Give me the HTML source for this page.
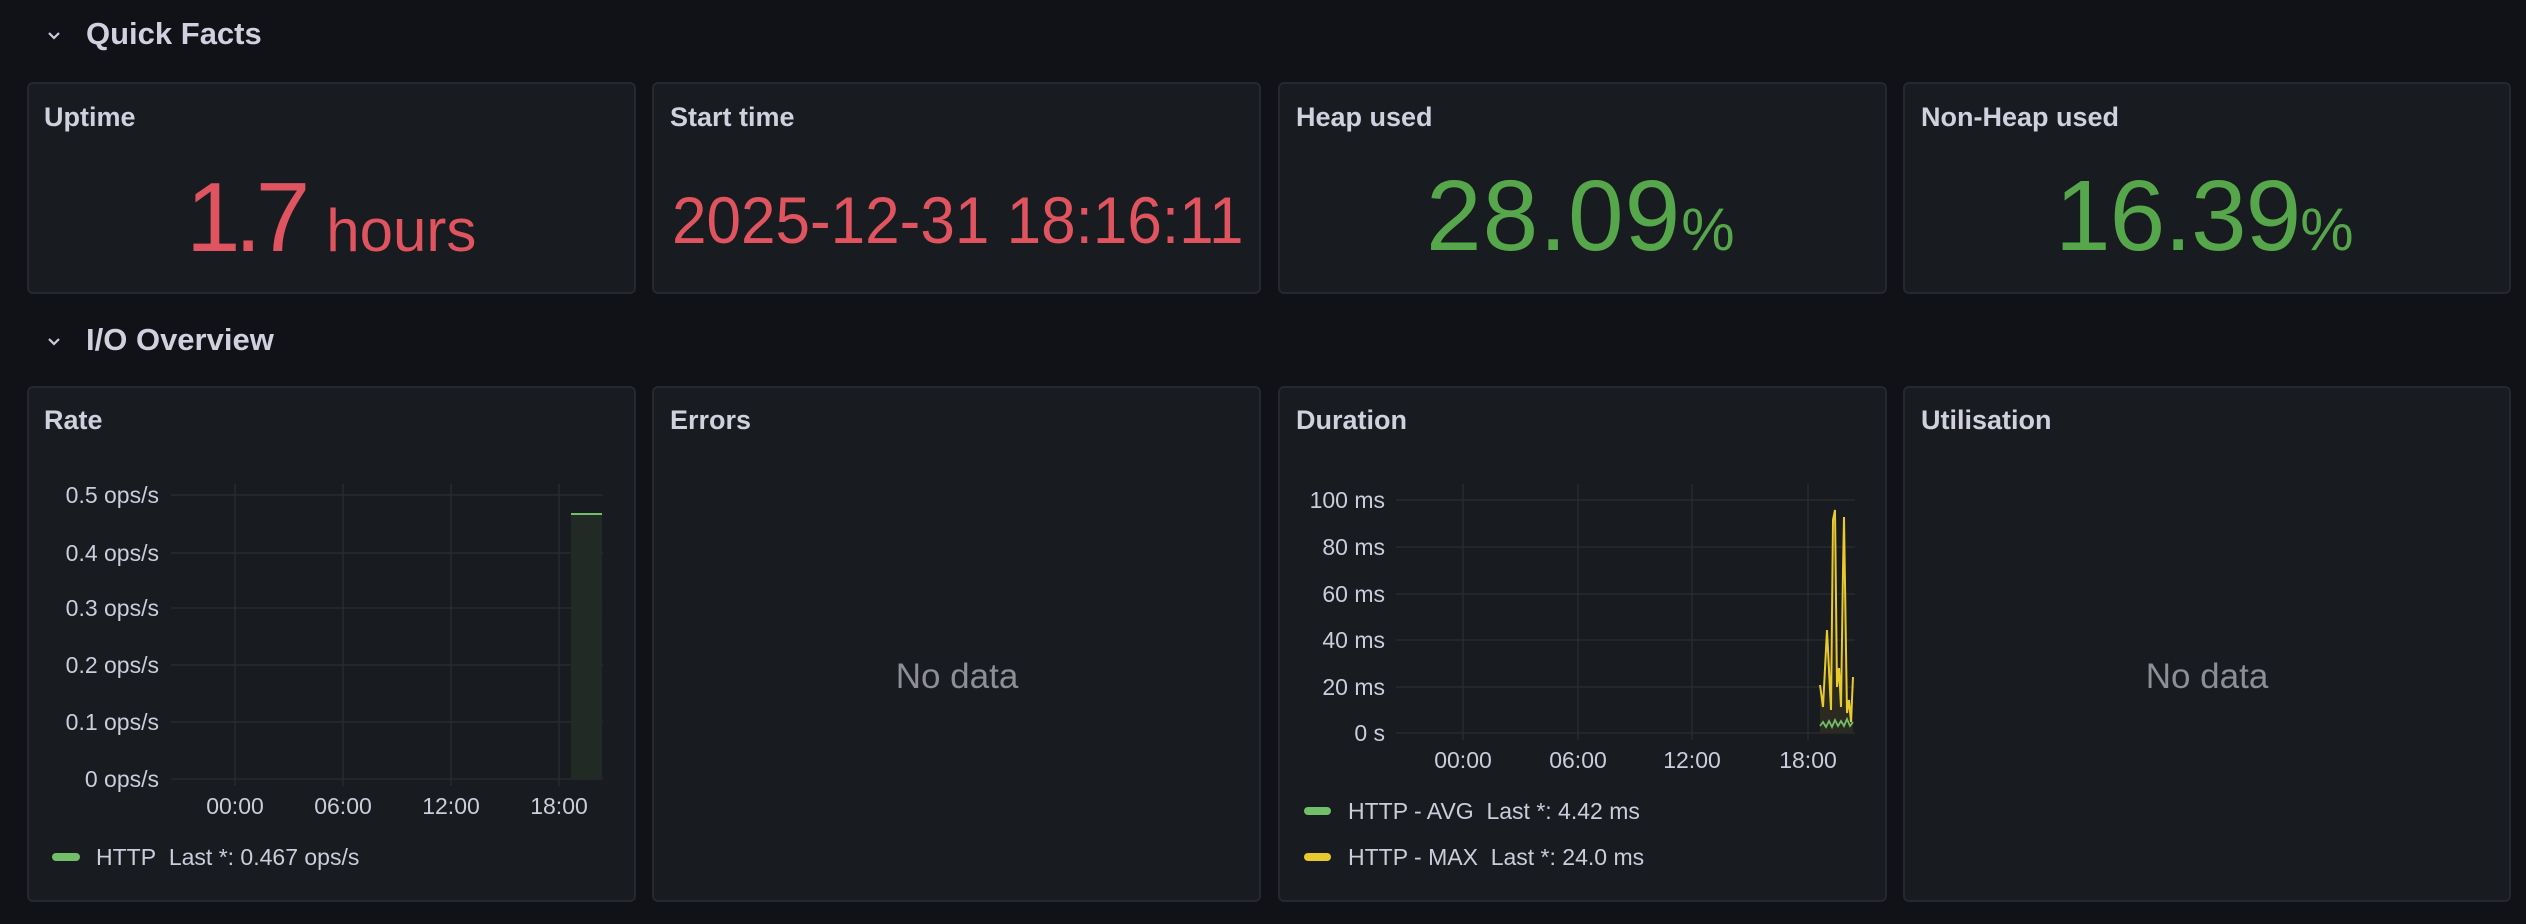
<!DOCTYPE html>
<html><head><meta charset="utf-8"><style>
*{margin:0;padding:0;box-sizing:border-box}
body{width:2526px;height:924px;background:#111217;position:relative;overflow:hidden;font-family:"Liberation Sans",sans-serif;color:#ccccdc}
.a{position:absolute;white-space:nowrap}
.p{position:absolute;background:#181b1f;border:2px solid #25282e;border-radius:6px}
.t{font-size:27px;font-weight:bold;color:#d0d0de}
.h{font-size:31px;font-weight:bold;color:#d0d0de}
.yl{font-size:23px;text-align:right;width:150px;line-height:28px;color:#ccccdc}
.xl{font-size:23px;line-height:28px;width:100px;text-align:center;color:#ccccdc}
.lg{font-size:23px;line-height:28px;color:#ccccdc}
.sw{position:absolute;height:8px;border-radius:4px}
.nd{font-size:35px;color:#8e8e96;line-height:40px;text-align:center}
</style></head><body>
<svg class="a" style="left:44px;top:26px" width="20" height="20" viewBox="0 0 20 20"><path d="M5 7 L10 12 L15 7" stroke="#ccccdc" stroke-width="2.2" fill="none"/></svg>
<div class="a h" style="left:86px;top:16px;line-height:36px">Quick Facts</div>
<svg class="a" style="left:44px;top:332px" width="20" height="20" viewBox="0 0 20 20"><path d="M5 7 L10 12 L15 7" stroke="#ccccdc" stroke-width="2.2" fill="none"/></svg>
<div class="a h" style="left:86px;top:322px;line-height:36px">I/O Overview</div>

<div class="p" style="left:27px;top:82px;width:609px;height:212px"></div>
<div class="p" style="left:652px;top:82px;width:609px;height:212px"></div>
<div class="p" style="left:1278px;top:82px;width:609px;height:212px"></div>
<div class="p" style="left:1903px;top:82px;width:608px;height:212px"></div>
<div class="a t" style="left:44px;top:101px;line-height:32px">Uptime</div>
<div class="a t" style="left:670px;top:101px;line-height:32px">Start time</div>
<div class="a t" style="left:1296px;top:101px;line-height:32px">Heap used</div>
<div class="a t" style="left:1921px;top:101px;line-height:32px">Non-Heap used</div>

<div class="a" style="left:186px;top:167px;line-height:100px;color:#e0545f"><span style="font-size:98px;letter-spacing:-6px">1.7</span><span style="font-size:60px;margin-left:22px">hours</span></div>
<div class="a" style="left:672px;top:180px;line-height:80px;color:#e0545f;font-size:66px;transform-origin:0 0;transform:scaleX(0.94)">2025-12-31 18:16:11</div>
<div class="a" style="left:1426px;top:166px;line-height:100px;color:#56a64b"><span style="font-size:100px;letter-spacing:1px">28.09</span><span style="font-size:60px">%</span></div>
<div class="a" style="left:2055px;top:166px;line-height:100px;color:#56a64b"><span style="font-size:100px;letter-spacing:-1px">16.39</span><span style="font-size:60px">%</span></div>

<div class="p" style="left:27px;top:386px;width:609px;height:516px"></div>
<div class="p" style="left:652px;top:386px;width:609px;height:516px"></div>
<div class="p" style="left:1278px;top:386px;width:609px;height:516px"></div>
<div class="p" style="left:1903px;top:386px;width:608px;height:516px"></div>
<div class="a t" style="left:44px;top:404px;line-height:32px">Rate</div>
<div class="a t" style="left:670px;top:404px;line-height:32px">Errors</div>
<div class="a t" style="left:1296px;top:404px;line-height:32px">Duration</div>
<div class="a t" style="left:1921px;top:404px;line-height:32px">Utilisation</div>

<svg class="a" style="left:0;top:0" width="2526" height="924">
<g stroke="#2b2e34" stroke-width="1.2">
<line x1="171" y1="495" x2="603" y2="495"/><line x1="171" y1="553" x2="603" y2="553"/><line x1="171" y1="608" x2="603" y2="608"/><line x1="171" y1="665" x2="603" y2="665"/><line x1="171" y1="722" x2="603" y2="722"/><line x1="171" y1="779" x2="603" y2="779"/>
<line x1="235" y1="484" x2="235" y2="786"/><line x1="343" y1="484" x2="343" y2="786"/><line x1="451" y1="484" x2="451" y2="786"/><line x1="559" y1="484" x2="559" y2="786"/>
<line x1="1396" y1="500" x2="1855" y2="500"/><line x1="1396" y1="547" x2="1855" y2="547"/><line x1="1396" y1="594" x2="1855" y2="594"/><line x1="1396" y1="640" x2="1855" y2="640"/><line x1="1396" y1="687" x2="1855" y2="687"/><line x1="1396" y1="733" x2="1855" y2="733"/>
<line x1="1463" y1="484" x2="1463" y2="740"/><line x1="1578" y1="484" x2="1578" y2="740"/><line x1="1692" y1="484" x2="1692" y2="740"/><line x1="1808" y1="484" x2="1808" y2="740"/>
</g>
<rect x="571" y="514" width="31" height="265" fill="#222a26"/>
<line x1="571" y1="514" x2="602" y2="514" stroke="#73bf69" stroke-width="2"/>
<polygon points="1820,685 1821,692 1823,707 1827,630 1831,710 1833,520 1835,510 1837,687 1839,668 1841,707 1843,570 1844,517 1846,650 1847,713 1849,700 1851,722 1853,677 1853,733 1820,733" fill="#2a2a20"/>
<polyline points="1820,685 1821,692 1823,707 1827,630 1831,710 1833,520 1835,510 1837,687 1839,668 1841,707 1843,570 1844,517 1846,650 1847,713 1849,700 1851,722 1853,677" fill="none" stroke="#e8c930" stroke-width="2"/>
<polyline points="1820,726 1823,722 1826,727 1829,721 1832,727 1835,720 1838,726 1841,721 1844,726 1847,719 1850,726 1853,722" fill="none" stroke="#73bf69" stroke-width="1.8"/>
</svg>

<div class="a yl" style="left:9px;top:481px">0.5 ops/s</div>
<div class="a yl" style="left:9px;top:539px">0.4 ops/s</div>
<div class="a yl" style="left:9px;top:594px">0.3 ops/s</div>
<div class="a yl" style="left:9px;top:651px">0.2 ops/s</div>
<div class="a yl" style="left:9px;top:708px">0.1 ops/s</div>
<div class="a yl" style="left:9px;top:765px">0 ops/s</div>
<div class="a xl" style="left:185px;top:792px">00:00</div>
<div class="a xl" style="left:293px;top:792px">06:00</div>
<div class="a xl" style="left:401px;top:792px">12:00</div>
<div class="a xl" style="left:509px;top:792px">18:00</div>
<div class="sw" style="left:52px;top:853px;width:28px;background:#73bf69"></div>
<div class="a lg" style="left:96px;top:843px">HTTP&nbsp; Last *: 0.467 ops/s</div>

<div class="a nd" style="left:657px;top:657px;width:600px">No data</div>
<div class="a nd" style="left:1907px;top:657px;width:600px">No data</div>

<div class="a yl" style="left:1235px;top:486px">100 ms</div>
<div class="a yl" style="left:1235px;top:533px">80 ms</div>
<div class="a yl" style="left:1235px;top:580px">60 ms</div>
<div class="a yl" style="left:1235px;top:626px">40 ms</div>
<div class="a yl" style="left:1235px;top:673px">20 ms</div>
<div class="a yl" style="left:1235px;top:719px">0 s</div>
<div class="a xl" style="left:1413px;top:746px">00:00</div>
<div class="a xl" style="left:1528px;top:746px">06:00</div>
<div class="a xl" style="left:1642px;top:746px">12:00</div>
<div class="a xl" style="left:1758px;top:746px">18:00</div>
<div class="sw" style="left:1304px;top:807px;width:27px;background:#73bf69"></div>
<div class="a lg" style="left:1348px;top:797px">HTTP - AVG&nbsp; Last *: 4.42 ms</div>
<div class="sw" style="left:1304px;top:853px;width:27px;background:#e8c930"></div>
<div class="a lg" style="left:1348px;top:843px">HTTP - MAX&nbsp; Last *: 24.0 ms</div>
</body></html>
